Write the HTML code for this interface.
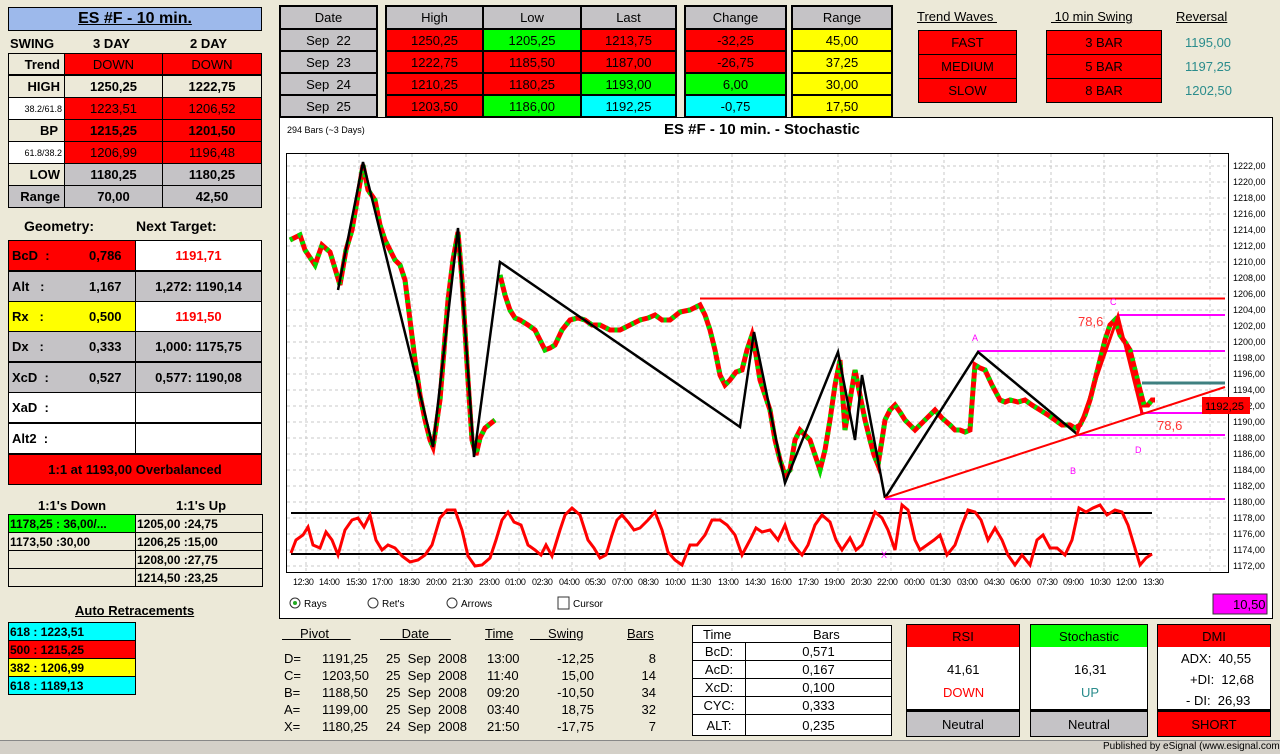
<!DOCTYPE html>
<html><head><meta charset="utf-8">
<style>
*{margin:0;padding:0;box-sizing:border-box}
body{width:1280px;height:754px;background:#ECE9D8;font-family:"Liberation Sans",Arial,sans-serif;position:relative;overflow:hidden;color:#000}
.a{position:absolute}
.c{position:absolute;border:1px solid #000;display:flex;align-items:center;justify-content:center;font-size:13px}
.b{font-weight:bold}
.r{background:#f00}.g{background:#0f0}.y{background:#ff0}.cy{background:#0ff}.gr{background:#C5C3C6}.w{background:#fff}.bg{background:#ECE9D8}
.n{font-family:"Liberation Sans Narrow","Liberation Sans",sans-serif;}
.t{position:absolute;font-size:13px;white-space:nowrap}
.u{text-decoration:underline}
.blk{position:absolute;background:#000}
</style></head><body>

<!-- LEFT PANEL -->
<div class="c b u" style="left:8px;top:7px;width:254px;height:24px;background:#9DB9EB;font-size:16px">ES #F - 10 min.</div>
<div class="t b" style="left:10px;top:36px">SWING</div>
<div class="t b" style="left:93px;top:36px">3 DAY</div>
<div class="t b" style="left:190px;top:36px">2 DAY</div>

<div class="c b bg" style="left:8px;top:53px;width:57px;height:22px;justify-content:flex-end;padding-right:4px">Trend</div>
<div class="c r" style="left:64px;top:53px;width:99px;height:22px">DOWN</div>
<div class="c r" style="left:162px;top:53px;width:100px;height:22px">DOWN</div>
<div class="c b bg" style="left:8px;top:75px;width:57px;height:23px;justify-content:flex-end;padding-right:4px">HIGH</div>
<div class="c b bg" style="left:64px;top:75px;width:99px;height:23px">1250,25</div>
<div class="c b bg" style="left:162px;top:75px;width:100px;height:23px">1222,75</div>
<div class="c w" style="left:8px;top:97px;width:57px;height:23px;font-size:9px;justify-content:flex-end;padding-right:2px">38.2/61.8</div>
<div class="c r" style="left:64px;top:97px;width:99px;height:23px">1223,51</div>
<div class="c r" style="left:162px;top:97px;width:100px;height:23px">1206,52</div>
<div class="c b bg" style="left:8px;top:119px;width:57px;height:23px;justify-content:flex-end;padding-right:6px">BP</div>
<div class="c b r" style="left:64px;top:119px;width:99px;height:23px">1215,25</div>
<div class="c b r" style="left:162px;top:119px;width:100px;height:23px">1201,50</div>
<div class="c w" style="left:8px;top:141px;width:57px;height:23px;font-size:9px;justify-content:flex-end;padding-right:2px">61.8/38.2</div>
<div class="c r" style="left:64px;top:141px;width:99px;height:23px">1206,99</div>
<div class="c r" style="left:162px;top:141px;width:100px;height:23px">1196,48</div>
<div class="c b bg" style="left:8px;top:163px;width:57px;height:23px;justify-content:flex-end;padding-right:4px">LOW</div>
<div class="c b gr" style="left:64px;top:163px;width:99px;height:23px">1180,25</div>
<div class="c b gr" style="left:162px;top:163px;width:100px;height:23px">1180,25</div>
<div class="c b gr" style="left:8px;top:185px;width:57px;height:23px;justify-content:flex-end;padding-right:4px">Range</div>
<div class="c b gr" style="left:64px;top:185px;width:99px;height:23px">70,00</div>
<div class="c b gr" style="left:162px;top:185px;width:100px;height:23px">42,50</div>

<div class="t b" style="left:24px;top:218px;font-size:14px">Geometry:</div>
<div class="t b" style="left:136px;top:218px;font-size:14px">Next Target:</div>

<div class="blk" style="left:8px;top:240px;width:254px;height:245px"></div>
<div class="c b r" style="left:9px;top:241px;width:126px;height:29px;border:0;justify-content:flex-start;padding-left:3px">BcD &nbsp;:<span style="position:absolute;left:80px">0,786</span></div>
<div class="c b w" style="left:136px;top:241px;width:125px;height:29px;border:0;color:#f00">1191,71</div>
<div class="c b gr" style="left:9px;top:272px;width:126px;height:29px;border:0;justify-content:flex-start;padding-left:3px">Alt &nbsp;&nbsp;:<span style="position:absolute;left:80px">1,167</span></div>
<div class="c b gr" style="left:136px;top:272px;width:125px;height:29px;border:0">1,272: 1190,14</div>
<div class="c b y" style="left:9px;top:302px;width:126px;height:29px;border:0;justify-content:flex-start;padding-left:3px">Rx &nbsp;&nbsp;:<span style="position:absolute;left:80px">0,500</span></div>
<div class="c b w" style="left:136px;top:302px;width:125px;height:29px;border:0;color:#f00">1191,50</div>
<div class="c b gr" style="left:9px;top:332px;width:126px;height:29px;border:0;justify-content:flex-start;padding-left:3px">Dx &nbsp;&nbsp;:<span style="position:absolute;left:80px">0,333</span></div>
<div class="c b gr" style="left:136px;top:332px;width:125px;height:29px;border:0">1,000: 1175,75</div>
<div class="c b gr" style="left:9px;top:363px;width:126px;height:29px;border:0;justify-content:flex-start;padding-left:3px">XcD &nbsp;:<span style="position:absolute;left:80px">0,527</span></div>
<div class="c b gr" style="left:136px;top:363px;width:125px;height:29px;border:0">0,577: 1190,08</div>
<div class="c b w" style="left:9px;top:393px;width:126px;height:29px;border:0;justify-content:flex-start;padding-left:3px">XaD &nbsp;:</div>
<div class="c w" style="left:136px;top:393px;width:125px;height:29px;border:0"></div>
<div class="c b w" style="left:9px;top:424px;width:126px;height:29px;border:0;justify-content:flex-start;padding-left:3px">Alt2 &nbsp;:</div>
<div class="c w" style="left:136px;top:424px;width:125px;height:29px;border:0"></div>
<div class="c b r" style="left:9px;top:455px;width:252px;height:29px;border:0">1:1 at 1193,00 Overbalanced</div>

<div class="t b" style="left:38px;top:498px">1:1's Down</div>
<div class="t b" style="left:176px;top:498px">1:1's Up</div>
<div class="c b g" style="left:8px;top:514px;width:128px;height:19px;justify-content:flex-start;padding-left:1px;font-size:12px">1178,25 : 36,00/...</div>
<div class="c b bg" style="left:135px;top:514px;width:128px;height:19px;justify-content:flex-start;padding-left:1px;font-size:12px">1205,00 :24,75</div>
<div class="c b bg" style="left:8px;top:532px;width:128px;height:19px;justify-content:flex-start;padding-left:1px;font-size:12px">1173,50 :30,00</div>
<div class="c b bg" style="left:135px;top:532px;width:128px;height:19px;justify-content:flex-start;padding-left:1px;font-size:12px">1206,25 :15,00</div>
<div class="c bg" style="left:8px;top:550px;width:128px;height:19px"></div>
<div class="c b bg" style="left:135px;top:550px;width:128px;height:19px;justify-content:flex-start;padding-left:1px;font-size:12px">1208,00 :27,75</div>
<div class="c bg" style="left:8px;top:568px;width:128px;height:19px"></div>
<div class="c b bg" style="left:135px;top:568px;width:128px;height:19px;justify-content:flex-start;padding-left:1px;font-size:12px">1214,50 :23,25</div>

<div class="t b u" style="left:75px;top:603px">Auto Retracements</div>
<div class="c b cy" style="left:8px;top:622px;width:128px;height:19px;justify-content:flex-start;padding-left:1px;font-size:12px">618 : 1223,51</div>
<div class="c b r" style="left:8px;top:640px;width:128px;height:19px;justify-content:flex-start;padding-left:1px;font-size:12px">500 : 1215,25</div>
<div class="c b y" style="left:8px;top:658px;width:128px;height:19px;justify-content:flex-start;padding-left:1px;font-size:12px">382 : 1206,99</div>
<div class="c b cy" style="left:8px;top:676px;width:128px;height:19px;justify-content:flex-start;padding-left:1px;font-size:12px">618 : 1189,13</div>

<!-- TOP TABLES -->
<div class="blk" style="left:279px;top:5px;width:99px;height:113px"></div>
<div class="c gr n" style="left:281px;top:7px;width:95px;height:21px;border:0">Date</div>
<div class="c gr n" style="left:281px;top:30px;width:95px;height:20px;border:0">Sep &nbsp;22</div>
<div class="c gr n" style="left:281px;top:52px;width:95px;height:20px;border:0">Sep &nbsp;23</div>
<div class="c gr n" style="left:281px;top:74px;width:95px;height:20px;border:0">Sep &nbsp;24</div>
<div class="c gr n" style="left:281px;top:96px;width:95px;height:20px;border:0">Sep &nbsp;25</div>

<div class="blk" style="left:385px;top:5px;width:292px;height:113px"></div>
<div class="c gr" style="left:387px;top:7px;width:95px;height:21px;border:0">High</div>
<div class="c gr" style="left:484px;top:7px;width:96px;height:21px;border:0">Low</div>
<div class="c gr" style="left:582px;top:7px;width:93px;height:21px;border:0">Last</div>
<div class="c r" style="left:387px;top:30px;width:95px;height:20px;border:0">1250,25</div>
<div class="c g" style="left:484px;top:30px;width:96px;height:20px;border:0">1205,25</div>
<div class="c r" style="left:582px;top:30px;width:93px;height:20px;border:0">1213,75</div>
<div class="c r" style="left:387px;top:52px;width:95px;height:20px;border:0">1222,75</div>
<div class="c r" style="left:484px;top:52px;width:96px;height:20px;border:0">1185,50</div>
<div class="c r" style="left:582px;top:52px;width:93px;height:20px;border:0">1187,00</div>
<div class="c r" style="left:387px;top:74px;width:95px;height:20px;border:0">1210,25</div>
<div class="c r" style="left:484px;top:74px;width:96px;height:20px;border:0">1180,25</div>
<div class="c g" style="left:582px;top:74px;width:93px;height:20px;border:0">1193,00</div>
<div class="c r" style="left:387px;top:96px;width:95px;height:20px;border:0">1203,50</div>
<div class="c g" style="left:484px;top:96px;width:96px;height:20px;border:0">1186,00</div>
<div class="c cy" style="left:582px;top:96px;width:93px;height:20px;border:0">1192,25</div>

<div class="blk" style="left:684px;top:5px;width:103px;height:113px"></div>
<div class="c gr" style="left:686px;top:7px;width:99px;height:21px;border:0">Change</div>
<div class="c r" style="left:686px;top:30px;width:99px;height:20px;border:0">-32,25</div>
<div class="c r" style="left:686px;top:52px;width:99px;height:20px;border:0">-26,75</div>
<div class="c g" style="left:686px;top:74px;width:99px;height:20px;border:0">6,00</div>
<div class="c cy" style="left:686px;top:96px;width:99px;height:20px;border:0">-0,75</div>

<div class="blk" style="left:791px;top:5px;width:102px;height:113px"></div>
<div class="c gr" style="left:793px;top:7px;width:98px;height:21px;border:0">Range</div>
<div class="c y" style="left:793px;top:30px;width:98px;height:20px;border:0">45,00</div>
<div class="c y" style="left:793px;top:52px;width:98px;height:20px;border:0">37,25</div>
<div class="c y" style="left:793px;top:74px;width:98px;height:20px;border:0">30,00</div>
<div class="c y" style="left:793px;top:96px;width:98px;height:20px;border:0">17,50</div>

<div class="t u" style="left:917px;top:9px">Trend Waves&nbsp;</div>
<div class="t u" style="left:1051px;top:9px">&nbsp;10 min Swing</div>
<div class="t u" style="left:1176px;top:9px">Reversal</div>
<div class="c r" style="left:918px;top:30px;width:99px;height:25px">FAST</div>
<div class="c r" style="left:918px;top:54px;width:99px;height:25px">MEDIUM</div>
<div class="c r" style="left:918px;top:78px;width:99px;height:25px">SLOW</div>
<div class="c r" style="left:1046px;top:30px;width:116px;height:25px">3 BAR</div>
<div class="c r" style="left:1046px;top:54px;width:116px;height:25px">5 BAR</div>
<div class="c r" style="left:1046px;top:78px;width:116px;height:25px">8 BAR</div>
<div class="t" style="left:1185px;top:35px;color:#2A8C8C">1195,00</div>
<div class="t" style="left:1185px;top:59px;color:#2A8C8C">1197,25</div>
<div class="t" style="left:1185px;top:83px;color:#2A8C8C">1202,50</div>

<!-- CHART -->
<div class="a" style="left:279px;top:117px;width:994px;height:502px;background:#fff;border:1px solid #000"></div>
<div class="t" style="left:287px;top:125px;font-size:9px">294 Bars (~3 Days)</div>
<div class="t b" style="left:664px;top:121px;font-size:15px">ES #F - 10 min. - Stochastic</div>

<svg class="a" style="left:0;top:0" width="1280" height="754">
<defs>
<pattern id="hg" width="8" height="16" patternUnits="userSpaceOnUse" y="166"><rect width="4" height="1" fill="#bbb"/></pattern>
</defs>
<g stroke="#c8c8c8" stroke-dasharray="3 3" stroke-width="1">
<line x1="287" x2="1228" y1="166" y2="166"/><line x1="287" x2="1228" y1="182" y2="182"/><line x1="287" x2="1228" y1="198" y2="198"/><line x1="287" x2="1228" y1="214" y2="214"/><line x1="287" x2="1228" y1="230" y2="230"/><line x1="287" x2="1228" y1="246" y2="246"/><line x1="287" x2="1228" y1="262" y2="262"/><line x1="287" x2="1228" y1="278" y2="278"/><line x1="287" x2="1228" y1="294" y2="294"/><line x1="287" x2="1228" y1="310" y2="310"/><line x1="287" x2="1228" y1="326" y2="326"/><line x1="287" x2="1228" y1="342" y2="342"/><line x1="287" x2="1228" y1="358" y2="358"/><line x1="287" x2="1228" y1="374" y2="374"/><line x1="287" x2="1228" y1="390" y2="390"/><line x1="287" x2="1228" y1="406" y2="406"/><line x1="287" x2="1228" y1="422" y2="422"/><line x1="287" x2="1228" y1="438" y2="438"/><line x1="287" x2="1228" y1="454" y2="454"/><line x1="287" x2="1228" y1="470" y2="470"/><line x1="287" x2="1228" y1="486" y2="486"/><line x1="287" x2="1228" y1="502" y2="502"/><line x1="287" x2="1228" y1="518" y2="518"/><line x1="287" x2="1228" y1="534" y2="534"/><line x1="287" x2="1228" y1="550" y2="550"/><line x1="287" x2="1228" y1="566" y2="566"/>
<line x1="306" x2="306" y1="154" y2="572"/><line x1="359" x2="359" y1="154" y2="572"/><line x1="412" x2="412" y1="154" y2="572"/><line x1="466" x2="466" y1="154" y2="572"/><line x1="519" x2="519" y1="154" y2="572"/><line x1="572" x2="572" y1="154" y2="572"/><line x1="625" x2="625" y1="154" y2="572"/><line x1="678" x2="678" y1="154" y2="572"/><line x1="732" x2="732" y1="154" y2="572"/><line x1="785" x2="785" y1="154" y2="572"/><line x1="838" x2="838" y1="154" y2="572"/><line x1="891" x2="891" y1="154" y2="572"/><line x1="944" x2="944" y1="154" y2="572"/><line x1="998" x2="998" y1="154" y2="572"/><line x1="1051" x2="1051" y1="154" y2="572"/><line x1="1104" x2="1104" y1="154" y2="572"/><line x1="1157" x2="1157" y1="154" y2="572"/><line x1="1210" x2="1210" y1="154" y2="572"/>
</g>
<rect x="286.5" y="153.5" width="942" height="419" fill="none" stroke="#000"/>
<g font-family="Liberation Sans,sans-serif" font-size="9" fill="#000">
<text x="1233" y="169">1222,00</text><text x="1233" y="185">1220,00</text><text x="1233" y="201">1218,00</text><text x="1233" y="217">1216,00</text><text x="1233" y="233">1214,00</text><text x="1233" y="249">1212,00</text><text x="1233" y="265">1210,00</text><text x="1233" y="281">1208,00</text><text x="1233" y="297">1206,00</text><text x="1233" y="313">1204,00</text><text x="1233" y="329">1202,00</text><text x="1233" y="345">1200,00</text><text x="1233" y="361">1198,00</text><text x="1233" y="377">1196,00</text><text x="1233" y="393">1194,00</text><text x="1233" y="409">1192,00</text><text x="1233" y="425">1190,00</text><text x="1233" y="441">1188,00</text><text x="1233" y="457">1186,00</text><text x="1233" y="473">1184,00</text><text x="1233" y="489">1182,00</text><text x="1233" y="505">1180,00</text><text x="1233" y="521">1178,00</text><text x="1233" y="537">1176,00</text><text x="1233" y="553">1174,00</text><text x="1233" y="569">1172,00</text>
<text y="585" font-size="9" letter-spacing="-0.4">
<tspan x="293">12:30</tspan><tspan x="319">14:00</tspan><tspan x="346">15:30</tspan><tspan x="372">17:00</tspan><tspan x="399">18:30</tspan><tspan x="426">20:00</tspan><tspan x="452">21:30</tspan><tspan x="479">23:00</tspan><tspan x="505">01:00</tspan><tspan x="532">02:30</tspan><tspan x="559">04:00</tspan><tspan x="585">05:30</tspan><tspan x="612">07:00</tspan><tspan x="638">08:30</tspan><tspan x="665">10:00</tspan><tspan x="691">11:30</tspan><tspan x="718">13:00</tspan><tspan x="745">14:30</tspan><tspan x="771">16:00</tspan><tspan x="798">17:30</tspan><tspan x="824">19:00</tspan><tspan x="851">20:30</tspan><tspan x="877">22:00</tspan><tspan x="904">00:00</tspan><tspan x="930">01:30</tspan><tspan x="957">03:00</tspan><tspan x="984">04:30</tspan><tspan x="1010">06:00</tspan><tspan x="1037">07:30</tspan><tspan x="1063">09:00</tspan><tspan x="1090">10:30</tspan><tspan x="1116">12:00</tspan><tspan x="1143">13:30</tspan></text>
</g>

<!-- horizontal levels -->
<line x1="700" x2="1225" y1="298.5" y2="298.5" stroke="#f00" stroke-width="2"/>
<g stroke="#f0f" stroke-width="2">
<line x1="1118" x2="1225" y1="315" y2="315"/><line x1="978" x2="1225" y1="351" y2="351"/><line x1="1140" x2="1225" y1="413" y2="413"/><line x1="1077" x2="1225" y1="435" y2="435"/><line x1="885" x2="1225" y1="499" y2="499"/>
</g>
<line x1="1142" x2="1225" y1="383" y2="383" stroke="#3F8080" stroke-width="3"/>

<!-- price -->
<polyline fill="none" stroke="#000" stroke-width="1" points="290,240 300,235 305,250 315,265 322,245 330,252 340,285 346,250 352,230 358,195 363,165 368,190 375,200 380,225 385,240 390,250 395,260 400,265 405,280 410,320 415,360 420,395 425,420 430,440 433,447 437,420 440,400 444,350 448,300 453,260 458,232 462,280 465,330 468,380 472,440 476,455 480,438 485,428 495,420"/>
<polyline fill="none" stroke="#f00" stroke-width="5" points="290,240 300,235 305,250 315,265 322,245 330,252 340,285 346,250 352,230 358,195 363,165 368,190 375,200 380,225 385,240 390,250 395,260 400,265 405,280 410,320 415,360 420,395 425,420 430,440 433,447 437,420 440,400 444,350 448,300 453,260 458,232 462,280 465,330 468,380 472,440 476,455 480,438 485,428 495,420"/>
<polyline fill="none" stroke="#0d0" stroke-width="5" stroke-dasharray="3 6" points="290,240 300,235 305,250 315,265 322,245 330,252 340,285 346,250 352,230 358,195 363,165 368,190 375,200 380,225 385,240 390,250 395,260 400,265 405,280 410,320 415,360 420,395 425,420 430,440 433,447 437,420 440,400 444,350 448,300 453,260 458,232 462,280 465,330 468,380 472,440 476,455 480,438 485,428 495,420"/>

<polyline id="p2" fill="none" stroke="#000" stroke-width="1" points="500,275 505,295 510,310 515,318 520,320 528,325 535,330 540,340 545,350 550,348 555,345 562,330 570,320 578,318 585,320 592,325 600,325 610,330 620,330 630,325 640,320 648,318 655,315 662,320 670,320 680,312 690,310 700,305 705,315 710,330 715,350 720,375 725,385 730,380 736,372 742,370 747,350 752,335 756,355 760,380 765,395 770,410 775,440 780,460 785,475 790,470 795,440 800,430 805,435 810,440 815,455 820,470 825,450 830,420 835,385 840,360 843,400 845,430 850,400 855,370 858,385 860,395 865,420 870,440 874,455 878,465 882,440 885,420 890,410 895,405 900,412 905,420 910,425 915,430 920,425 925,420 930,415 935,410 942,418 950,425 955,430 960,430 965,432 970,430 973,390 975,365 980,368 985,370 992,385 1000,400 1005,402 1010,400 1018,402 1025,400 1032,405 1040,410 1048,415 1055,420 1062,425 1070,425 1075,428 1080,425 1085,415 1090,400 1095,380 1100,360 1105,340 1110,325 1115,320 1120,335 1125,342 1130,350 1135,370 1140,390 1144,405 1148,405 1152,400 1155,400"/>
<polyline fill="none" stroke="#f00" stroke-width="5" points="500,275 505,295 510,310 515,318 520,320 528,325 535,330 540,340 545,350 550,348 555,345 562,330 570,320 578,318 585,320 592,325 600,325 610,330 620,330 630,325 640,320 648,318 655,315 662,320 670,320 680,312 690,310 700,305 705,315 710,330 715,350 720,375 725,385 730,380 736,372 742,370 747,350 752,335 756,355 760,380 765,395 770,410 775,440 780,460 785,475 790,470 795,440 800,430 805,435 810,440 815,455 820,470 825,450 830,420 835,385 840,360 843,400 845,430 850,400 855,370 858,385 860,395 865,420 870,440 874,455 878,465 882,440 885,420 890,410 895,405 900,412 905,420 910,425 915,430 920,425 925,420 930,415 935,410 942,418 950,425 955,430 960,430 965,432 970,430 973,390 975,365 980,368 985,370 992,385 1000,400 1005,402 1010,400 1018,402 1025,400 1032,405 1040,410 1048,415 1055,420 1062,425 1070,425 1075,428 1080,425 1085,415 1090,400 1095,380 1100,360 1105,340 1110,325 1115,320 1120,335 1125,342 1130,350 1135,370 1140,390 1144,405 1148,405 1152,400 1155,400"/>
<polyline fill="none" stroke="#0d0" stroke-width="5" stroke-dasharray="3 6" points="500,275 505,295 510,310 515,318 520,320 528,325 535,330 540,340 545,350 550,348 555,345 562,330 570,320 578,318 585,320 592,325 600,325 610,330 620,330 630,325 640,320 648,318 655,315 662,320 670,320 680,312 690,310 700,305 705,315 710,330 715,350 720,375 725,385 730,380 736,372 742,370 747,350 752,335 756,355 760,380 765,395 770,410 775,440 780,460 785,475 790,470 795,440 800,430 805,435 810,440 815,455 820,470 825,450 830,420 835,385 840,360 843,400 845,430 850,400 855,370 858,385 860,395 865,420 870,440 874,455 878,465 882,440 885,420 890,410 895,405 900,412 905,420 910,425 915,430 920,425 925,420 930,415 935,410 942,418 950,425 955,430 960,430 965,432 970,430 973,390 975,365 980,368 985,370 992,385 1000,400 1005,402 1010,400 1018,402 1025,400 1032,405 1040,410 1048,415 1055,420 1062,425 1070,425 1075,428 1080,425 1085,415 1090,400 1095,380 1100,360 1105,340 1110,325 1115,320 1120,335 1125,342 1130,350 1135,370 1140,390 1144,405 1148,405 1152,400 1155,400"/>

<!-- zigzag -->
<polyline fill="none" stroke="#000" stroke-width="2.5" points="338,290 363,162 433,447 458,228 474,457 500,262 740,427 754,332 785,483 838,352 855,440 862,375 885,498"/>
<polyline fill="none" stroke="#000" stroke-width="2.5" points="885,498 978,352 1077,434"/>
<polyline fill="none" stroke="#f00" stroke-width="3" points="1077,434 1118,316 1142,413"/>
<line x1="885" y1="498" x2="1225" y2="387" stroke="#f00" stroke-width="2"/>

<!-- stochastic -->
<line x1="291" x2="1152" y1="513" y2="513" stroke="#000" stroke-width="2"/>
<line x1="291" x2="1152" y1="554" y2="554" stroke="#000" stroke-width="2"/>
<polyline fill="none" stroke="#f00" stroke-width="3" points="291,553 296,540 303,535 308,527 313,545 320,548 326,532 332,540 338,555 345,530 352,520 358,518 364,527 370,515 376,540 382,550 388,545 395,548 402,556 410,562 418,560 425,555 432,545 440,518 447,510 455,510 462,530 468,556 475,566 482,565 490,558 496,540 502,520 508,512 514,522 521,525 528,545 535,550 541,555 546,545 552,556 560,530 565,515 572,508 580,515 588,540 594,548 600,558 606,555 612,535 617,520 622,515 628,522 634,530 640,528 648,520 655,512 662,530 668,552 675,560 682,565 690,545 697,545 705,535 712,520 720,520 727,525 735,535 742,555 750,540 756,528 762,532 770,530 778,540 785,525 790,540 796,548 802,555 808,545 815,525 822,515 830,522 836,540 842,550 850,538 856,550 862,545 868,530 875,512 882,518 888,530 895,550 902,505 908,510 915,540 920,550 927,545 934,540 940,535 947,555 955,545 962,525 968,510 975,512 981,520 988,540 995,528 1002,540 1008,555 1015,565 1022,555 1030,565 1037,540 1043,535 1050,548 1057,548 1065,555 1072,540 1079,508 1086,512 1093,508 1100,505 1107,515 1115,510 1122,512 1128,525 1134,545 1140,565 1146,558 1152,554"/>

<g font-family="Liberation Sans,sans-serif">
<text x="1078" y="326" fill="#f33" font-size="13">78,6</text>
<text x="1157" y="430" fill="#f33" font-size="13">78,6</text>
<g fill="#f0f" font-size="9"><text x="972" y="341">A</text><text x="1110" y="305">C</text><text x="1070" y="474">B</text><text x="1135" y="453">D</text><text x="881" y="558">X</text></g>
</g>
<rect x="1202" y="397" width="48" height="17" fill="#f00"/>
<text x="1205" y="410" font-family="Liberation Sans,sans-serif" font-size="11">1192,25</text>

<!-- radios -->
<g font-family="Liberation Sans,sans-serif" font-size="10">
<circle cx="295" cy="603" r="5" fill="#fff" stroke="#333"/><circle cx="295" cy="603" r="2" fill="#2a2"/><text x="304" y="607">Rays</text>
<circle cx="373" cy="603" r="5" fill="#fff" stroke="#333"/><text x="382" y="607">Ret's</text>
<circle cx="452" cy="603" r="5" fill="#fff" stroke="#333"/><text x="461" y="607">Arrows</text>
<rect x="558" y="597" width="11" height="12" fill="#fff" stroke="#333"/><text x="573" y="607">Cursor</text>
</g>
<rect x="1213" y="594" width="54" height="20" fill="#f0f" stroke="#333"/>
<text x="1233" y="609" font-family="Liberation Sans,sans-serif" font-size="13">10,50</text>
</svg>

<!-- BOTTOM -->
<div class="t u" style="left:282px;top:626px">&nbsp;&nbsp;&nbsp;&nbsp;&nbsp;Pivot&nbsp;&nbsp;&nbsp;&nbsp;&nbsp;&nbsp;</div>
<div class="t u" style="left:380px;top:626px">&nbsp;&nbsp;&nbsp;&nbsp;&nbsp;&nbsp;Date&nbsp;&nbsp;&nbsp;&nbsp;&nbsp;&nbsp;</div>
<div class="t u" style="left:485px;top:626px">Time</div>
<div class="t u" style="left:530px;top:626px">&nbsp;&nbsp;&nbsp;&nbsp;&nbsp;Swing</div>
<div class="t u" style="left:627px;top:626px">Bars</div>
<div class="a" style="left:284px;top:650px;font-size:13px;line-height:17px;white-space:pre">D=
C=
B=
A=
X=</div>
<div class="a" style="left:322px;top:650px;font-size:13px;line-height:17px;white-space:pre">1191,25
1203,50
1188,50
1199,00
1180,25</div>
<div class="a" style="left:386px;top:650px;font-size:13px;line-height:17px;white-space:pre">25  Sep  2008
25  Sep  2008
25  Sep  2008
25  Sep  2008
24  Sep  2008</div>
<div class="a" style="left:487px;top:650px;font-size:13px;line-height:17px;white-space:pre">13:00
11:40
09:20
03:40
21:50</div>
<div class="a" style="left:548px;top:650px;width:46px;text-align:right;font-size:13px;line-height:17px;white-space:pre">-12,25
15,00
-10,50
18,75
-17,75</div>
<div class="a" style="left:620px;top:650px;width:36px;text-align:right;font-size:13px;line-height:17px;white-space:pre">8
14
34
32
7</div>

<div class="a w" style="left:692px;top:625px;width:200px;height:111px;border:1px solid #000"></div>
<div class="t" style="left:703px;top:627px">Time</div>
<div class="t" style="left:813px;top:627px">Bars</div>
<div class="c w" style="left:692px;top:642px;width:54px;height:19px">BcD:</div><div class="c w" style="left:745px;top:642px;width:147px;height:19px">0,571</div>
<div class="c w" style="left:692px;top:660px;width:54px;height:19px">AcD:</div><div class="c w" style="left:745px;top:660px;width:147px;height:19px">0,167</div>
<div class="c w" style="left:692px;top:678px;width:54px;height:19px">XcD:</div><div class="c w" style="left:745px;top:678px;width:147px;height:19px">0,100</div>
<div class="c w" style="left:692px;top:696px;width:54px;height:19px">CYC:</div><div class="c w" style="left:745px;top:696px;width:147px;height:19px">0,333</div>
<div class="c w" style="left:692px;top:714px;width:54px;height:22px">ALT:</div><div class="c w" style="left:745px;top:714px;width:147px;height:22px">0,235</div>

<div class="blk" style="left:906px;top:624px;width:114px;height:113px"></div>
<div class="c r" style="left:907px;top:625px;width:112px;height:22px;border:0">RSI</div>
<div class="a w" style="left:907px;top:647px;width:112px;height:62px"></div>
<div class="t" style="left:947px;top:662px">41,61</div>
<div class="t" style="left:943px;top:685px;color:#f00">DOWN</div>
<div class="c gr" style="left:907px;top:712px;width:112px;height:24px;border:0">Neutral</div>

<div class="blk" style="left:1030px;top:624px;width:118px;height:113px"></div>
<div class="c g" style="left:1031px;top:625px;width:116px;height:22px;border:0">Stochastic</div>
<div class="a w" style="left:1031px;top:647px;width:116px;height:62px"></div>
<div class="t" style="left:1074px;top:662px">16,31</div>
<div class="t" style="left:1081px;top:685px;color:#2A8C8C">UP</div>
<div class="c gr" style="left:1031px;top:712px;width:116px;height:24px;border:0">Neutral</div>

<div class="blk" style="left:1157px;top:624px;width:114px;height:113px"></div>
<div class="c r" style="left:1158px;top:625px;width:112px;height:22px;border:0">DMI</div>
<div class="a w" style="left:1158px;top:647px;width:112px;height:62px"></div>
<div class="t" style="left:1181px;top:651px">ADX: &nbsp;40,55</div>
<div class="t" style="left:1190px;top:672px">+DI: &nbsp;12,68</div>
<div class="t" style="left:1186px;top:693px">- DI: &nbsp;26,93</div>
<div class="c r" style="left:1158px;top:712px;width:112px;height:24px;border:0">SHORT</div>

<div class="a" style="left:0;top:740px;width:1280px;height:14px;background:#D4D0C8;border-top:1px solid #888"></div>
<div class="t" style="left:1103px;top:741px;font-size:10px">Published by eSignal (www.esignal.com)</div>
</body></html>
